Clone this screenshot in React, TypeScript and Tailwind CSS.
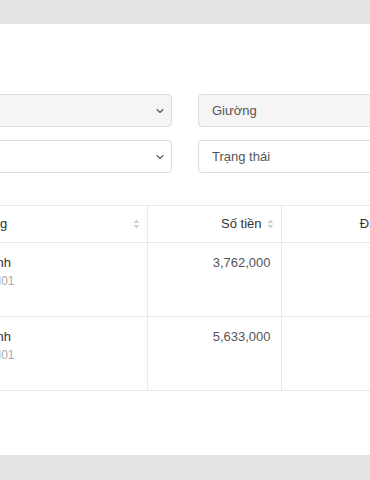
import { ChevronDown } from "lucide-react";

const rows = [
  { name: "Kim Anh", code: "Mã HM01", amount: "3,762,000", paid: "3,762,000" },
  { name: "Kim Anh", code: "Mã HM01", amount: "5,633,000", paid: "5,633,000" },
];

function SortIcon() {
  return (
    <svg width="7" height="10" viewBox="0 0 7 10" className="shrink-0 text-[#cfcfd6]">
      <path d="M3.5 0.5L6.5 4H0.5Z" fill="currentColor" />
      <path d="M3.5 9.5L6.5 6H0.5Z" fill="currentColor" />
    </svg>
  );
}

function Select({ muted }: { muted?: boolean }) {
  return (
    <div
      className={`flex h-[33px] items-center justify-end rounded-[4px] border border-[#dcdcdc] pr-[5px] ${
        muted ? "bg-[#f5f5f5]" : "bg-white"
      }`}
    >
      <ChevronDown size={12} strokeWidth={2.2} className="text-[#5a5a5a]" />
    </div>
  );
}

function Field({ label, muted }: { label: string; muted?: boolean }) {
  return (
    <div
      className={`flex h-[33px] items-center rounded-[4px] border border-[#dcdcdc] px-[13px] text-[13px] text-[#555] ${
        muted ? "bg-[#f5f5f5]" : "bg-white"
      }`}
    >
      {label}
    </div>
  );
}

export default function App() {
  return (
    <div className="h-[480px] w-[370px] overflow-hidden bg-[#e3e3e3] font-['Liberation_Sans',Arial,sans-serif]">
      <div className="mt-[24px] h-[431px] bg-white pt-[70px]">
        <div className="-ml-[150px] w-[900px]">
          {/* filters */}
          <div className="grid grid-cols-[300px_300px] gap-x-[26px] gap-y-[13px] pl-[22px]">
            <Select muted />
            <Field label="Giường" muted />
            <Select />
            <Field label="Trạng thái" />
          </div>

          {/* table */}
          <table className="mt-[32px] table-fixed border-collapse text-[13px]">
            <colgroup>
              <col className="w-[100px]" />
              <col className="w-[197px]" />
              <col className="w-[134px]" />
              <col className="w-[180px]" />
            </colgroup>
            <thead>
              <tr className="h-[37px] border-y border-[#e8e8ee] text-[#333]">
                <th className="border-r border-[#e8e8ee] px-[12px] text-left font-normal">#</th>
                <th className="border-r border-[#e8e8ee] pl-[12px] pr-[7px] font-normal">
                  <div className="flex items-center justify-between">
                    <span>Giường</span>
                    <SortIcon />
                  </div>
                </th>
                <th className="border-r border-[#e8e8ee] pl-[12px] pr-[7px] font-normal">
                  <div className="flex items-center justify-end gap-[5px]">
                    <span>Số tiền</span>
                    <SortIcon />
                  </div>
                </th>
                <th className="border-r border-[#e8e8ee] pl-[12px] pr-[7px] font-normal">
                  <div className="flex items-center justify-end gap-[5px]">
                    <span>Đã thanh toán</span>
                    <SortIcon />
                  </div>
                </th>
              </tr>
            </thead>
            <tbody>
              {rows.map((r, i) => (
                <tr key={i} className="h-[74px] border-b border-[#e8e8ee] align-top">
                  <td className="border-r border-[#e8e8ee] px-[12px] pt-[11px] text-[#555]">{i + 1}</td>
                  <td className="border-r border-[#e8e8ee] px-[12px] pt-[11px]">
                    <div className="leading-[18px] text-[#333]">{r.name}</div>
                    <div className="text-[12px] leading-[18px] text-[#aaa]">{r.code}</div>
                  </td>
                  <td className="border-r border-[#e8e8ee] pl-[11px] pr-[10px] pt-[11px] text-right leading-[18px] text-[#555]">
                    {r.amount}
                  </td>
                  <td className="border-r border-[#e8e8ee] pl-[11px] pr-[10px] pt-[11px] text-right leading-[18px] text-[#555]">
                    {r.paid}
                  </td>
                </tr>
              ))}
            </tbody>
          </table>
        </div>
      </div>
    </div>
  );
}
